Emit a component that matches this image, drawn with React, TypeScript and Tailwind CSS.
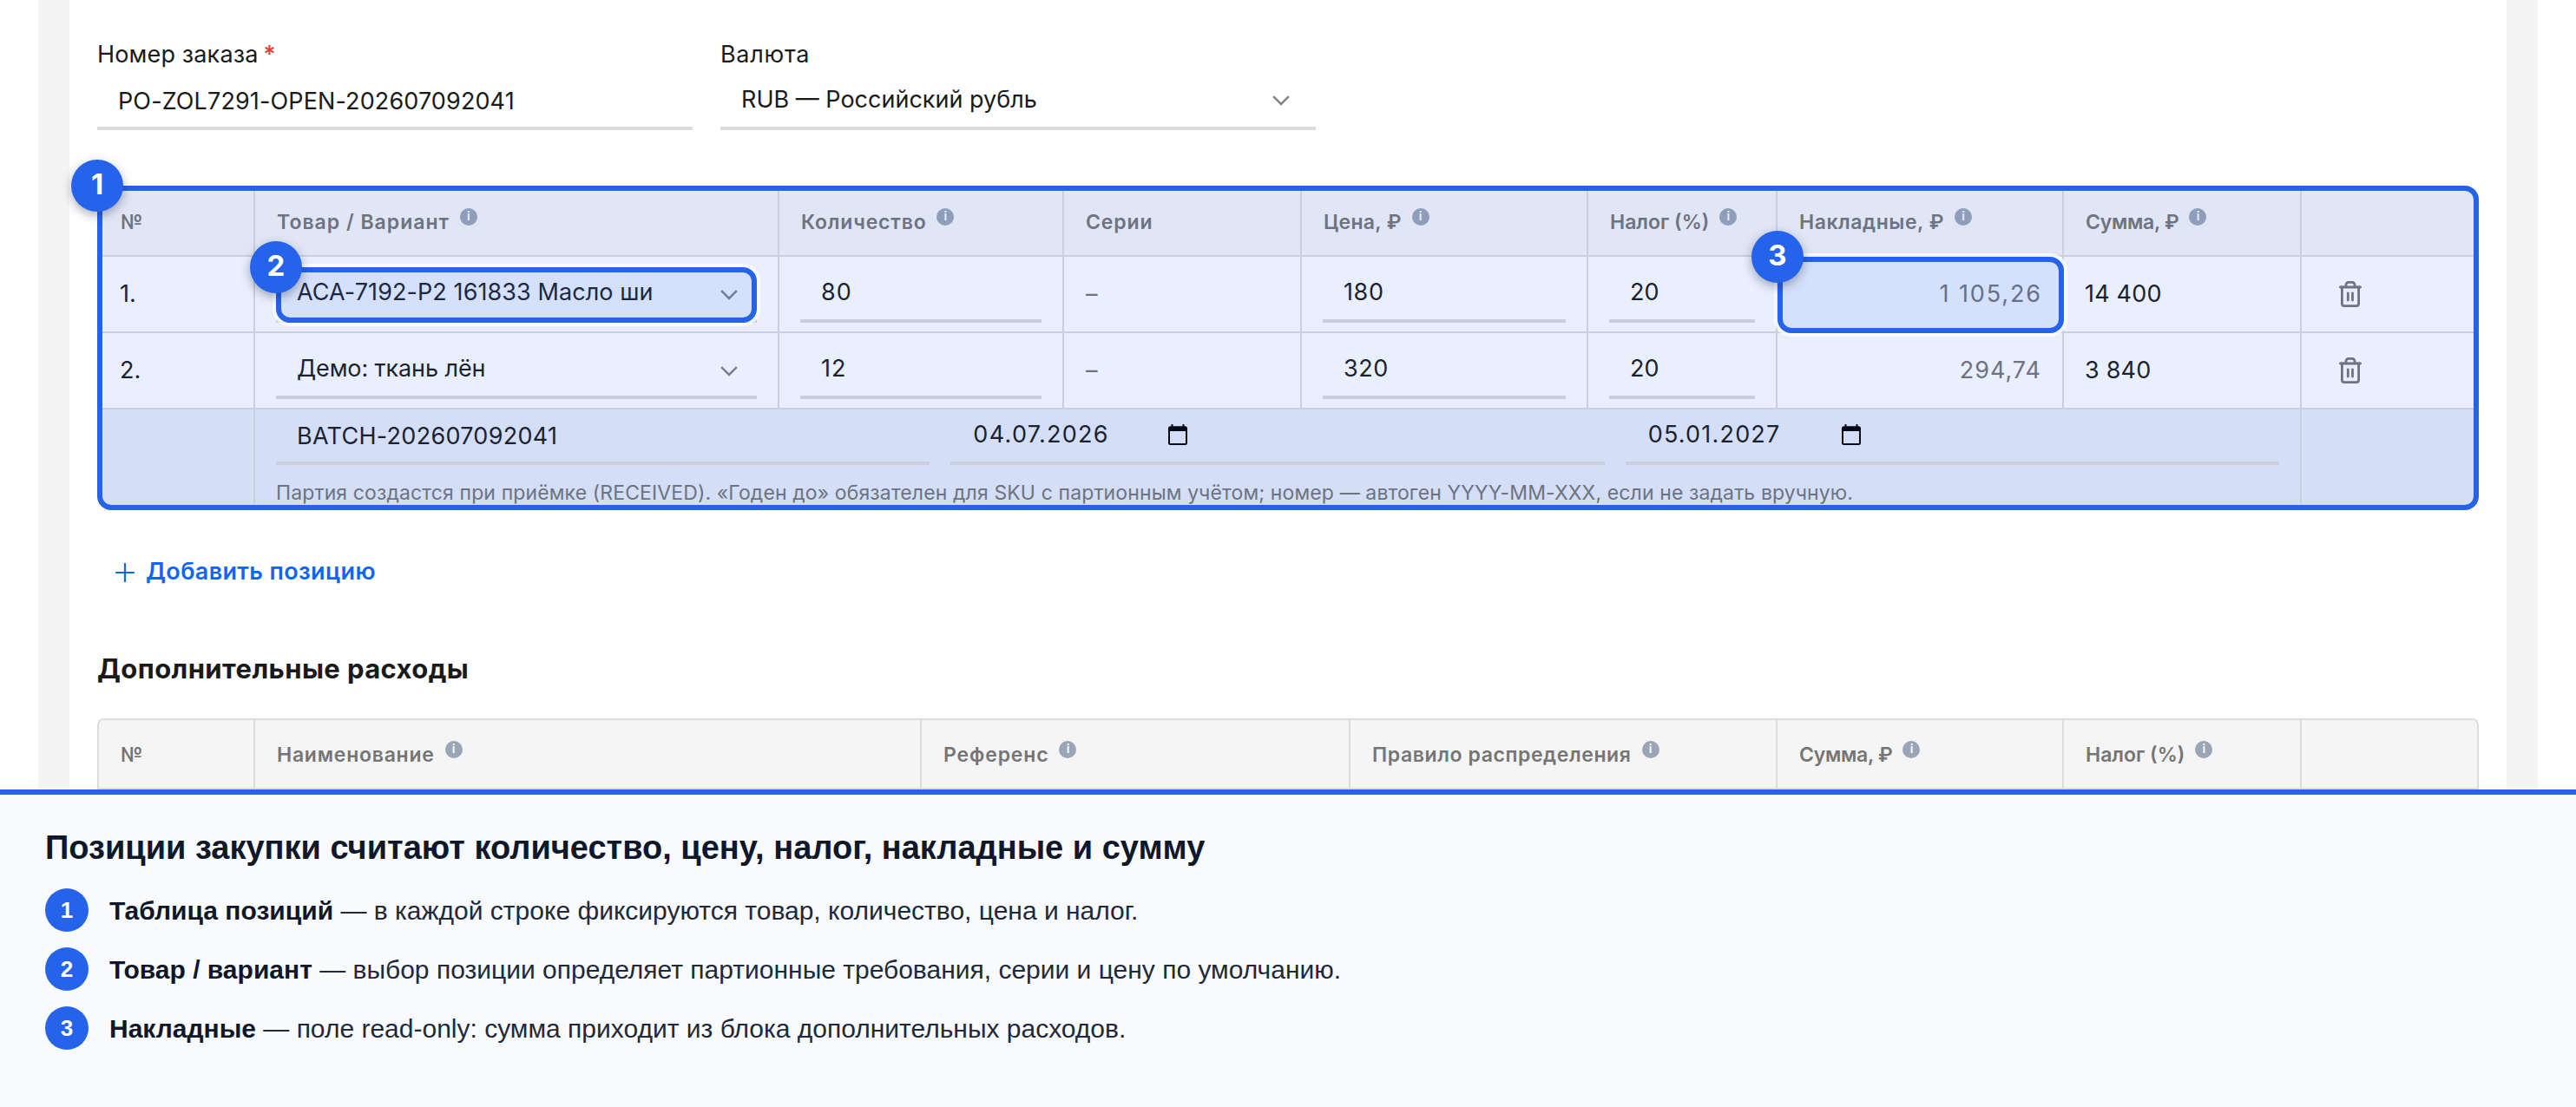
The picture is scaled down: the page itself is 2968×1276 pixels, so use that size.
import type { ReactNode } from "react";

const itemColumns = [
  { title: "№", width: "w-[180px]", tracking: "" },
  { title: "Товар / Вариант", width: "w-[604px]", tracking: "tracking-[1px]", info: true },
  { title: "Количество", width: "w-[328px]", tracking: "tracking-[0.8px]", info: true },
  { title: "Серии", width: "w-[274px]", tracking: "tracking-[0.9px]" },
  { title: "Цена, ₽", width: "w-[330px]", tracking: "tracking-[0.3px]", info: true },
  { title: "Налог (%)", width: "w-[218px]", tracking: "", info: true },
  { title: "Накладные, ₽", width: "w-[330px]", tracking: "tracking-[0.55px]", info: true },
  { title: "Сумма, ₽", width: "w-[274px]", tracking: "tracking-[-0.3px]", info: true },
  { title: "", width: "w-[202px]", tracking: "" },
];

const expenseColumns = [
  { title: "№", width: "w-[180px]", tracking: "" },
  { title: "Наименование", width: "w-[768px]", tracking: "tracking-[0.75px]", info: true },
  { title: "Референс", width: "w-[494px]", tracking: "tracking-[0.85px]", info: true },
  { title: "Правило распределения", width: "w-[492px]", tracking: "tracking-[0.6px]", info: true },
  { title: "Сумма, ₽", width: "w-[330px]", tracking: "tracking-[-0.3px]", info: true },
  { title: "Налог (%)", width: "w-[274px]", tracking: "", info: true },
  { title: "", width: "w-[202px]", tracking: "" },
];

const items = [
  {
    product: "ACA-7192-P2 161833 Масло ши",
    tracking: "tracking-[0.08px]",
    qty: "80",
    price: "180",
    tax: "20",
    overhead: "1 105,26",
    overheadTracking: "tracking-[1.9px] -mr-[1px]",
    total: "14 400",
    selected: true,
  },
  {
    product: "Демо: ткань лён",
    tracking: "tracking-[-0.1px]",
    qty: "12",
    price: "320",
    tax: "20",
    overhead: "294,74",
    overheadTracking: "tracking-[1px]",
    total: "3 840",
    selected: false,
  },
];

const legend = [
  { title: "Таблица позиций", text: "в каждой строке фиксируются товар, количество, цена и налог." },
  { title: "Товар / вариант", text: "выбор позиции определяет партионные требования, серии и цену по умолчанию." },
  { title: "Накладные", text: "поле read-only: сумма приходит из блока дополнительных расходов." },
];

function InfoIcon() {
  return (
    <span className="mb-3 ml-3 flex h-5 w-5 shrink-0 items-center justify-center rounded-full bg-[#9aa5b5] pb-[2px] text-[14px] leading-none font-semibold text-white">
      i
    </span>
  );
}

function Chevron() {
  return (
    <svg width="20" height="12" viewBox="0 0 20 12" fill="none" className="shrink-0">
      <path d="M1.2 1.2L10 10L18.8 1.2" stroke="#858585" strokeWidth="2.6" />
    </svg>
  );
}

function TrashIcon() {
  return (
    <svg width="26" height="30" viewBox="0 0 26 30" fill="none" stroke="#757575" strokeWidth="2.8" strokeLinecap="round" strokeLinejoin="round">
      <path d="M1.4 7h23.2" />
      <path d="M8 6.5V4.3a3 3 0 0 1 3-3h4a3 3 0 0 1 3 3v2.2" />
      <path d="M3.4 7v19a2.6 2.6 0 0 0 2.6 2.6h14a2.6 2.6 0 0 0 2.6-2.6V7" />
      <path d="M10.3 13.8v8.2M15.5 13.8v8.2" />
    </svg>
  );
}

function CalendarIcon() {
  return (
    <svg width="22" height="24" viewBox="0 0 22 24" fill="none" className="mb-[2px]">
      <path d="M4.5 0v4M17.5 0v4" stroke="#000" strokeWidth="2" />
      <rect x="1" y="3.2" width="20" height="19.8" rx="1.5" stroke="#000" strokeWidth="2" />
      <path d="M1 3h20v5H1z" fill="#000" />
    </svg>
  );
}

function Highlight({ n, className }: { n: number; className: string }) {
  return (
    <div
      className={`pointer-events-none absolute rounded-[16px] border-[6px] border-[#2563eb] bg-[#2563eb]/10 shadow-[0_0_0_4px_rgba(255,255,255,0.7)] ${className}`}
    >
      <span className="absolute -top-9 -left-9 flex h-[60px] w-[60px] items-center justify-center rounded-full bg-[#2563eb] pb-[3px] text-[33px] leading-none font-bold text-white shadow-[0_4px_12px_rgba(15,23,42,0.35)]">
        {n}
      </span>
    </div>
  );
}

function HeaderRow({ columns, className }: { columns: typeof itemColumns; className: string }) {
  return (
    <div className={`flex border-b-2 border-[#dcdcdc] bg-[#f5f5f5] ${className}`}>
      {columns.map((col, i) => (
        <div
          key={i}
          className={`flex shrink-0 items-center border-[#dcdcdc] pt-[2px] pr-6 pl-[25px] text-[23px] font-semibold text-[#757575] ${col.width} ${
            i < columns.length - 1 ? "border-r-2" : ""
          }`}
        >
          <span className={`whitespace-nowrap ${col.tracking}`}>{col.title}</span>
          {col.info && <InfoIcon />}
        </div>
      ))}
    </div>
  );
}

function Field({ children, className = "" }: { children: ReactNode; className?: string }) {
  return <div className={`relative flex h-16 items-center border-b-4 border-[#dcdcdc] px-6 ${className}`}>{children}</div>;
}

function Cell({ children, className }: { children?: ReactNode; className: string }) {
  return <div className={`relative shrink-0 border-[#dcdcdc] px-6 ${className}`}>{children}</div>;
}

export default function App() {
  return (
    <div className="flex h-[1276px] w-[2968px] flex-col overflow-hidden bg-white font-['Inter',sans-serif] text-[27px] text-[#1a1a1a]">
      <main className="mx-11 h-[910px] shrink-0 overflow-hidden bg-[#f4f4f4] px-9">
        <div className="h-full bg-white px-8 pt-[42px]">
          <div className="flex gap-8">
            <div className="w-[686px]">
              <div className="mb-[3px] leading-[41px] tracking-[0.15px]">
                Номер заказа<span className="ml-[6px] font-medium text-[#e53935]">*</span>
              </div>
              <Field>
                <span className="pt-[2px] tracking-[0.12px]">PO-ZOL7291-OPEN-202607092041</span>
              </Field>
            </div>
            <div className="w-[686px]">
              <div className="mb-[3px] leading-[41px] tracking-[0.7px]">Валюта</div>
              <Field className="justify-between pr-[30px]">
                <span className="pb-px">RUB — Российский рубль</span>
                <Chevron />
              </Field>
            </div>
          </div>

          {/* Позиции закупки */}
          <div className="relative mt-16 h-[374px]">
            <div className="h-full overflow-hidden rounded-[16px] border-2 border-b-0 border-[#dcdcdc]">
              <HeaderRow columns={itemColumns} className="h-20" />
              {items.map((item, i) => (
                <div key={i} className="flex h-[88px] border-b-2 border-[#dcdcdc]">
                  <Cell className="flex w-[180px] items-center border-r-2">{i + 1}.</Cell>
                  <Cell className="w-[604px] border-r-2 pt-3">
                    <Field className="justify-between pr-[22px]">
                      <span className={`pb-px whitespace-nowrap ${item.tracking}`}>{item.product}</span>
                      <span className="pt-1">
                        <Chevron />
                      </span>
                      {item.selected && <Highlight n={2} className="inset-x-0 top-0 -bottom-1 z-20" />}
                    </Field>
                  </Cell>
                  <Cell className="w-[328px] border-r-2 pt-3">
                    <Field>
                      <span className="pb-px tracking-[1px]">{item.qty}</span>
                    </Field>
                  </Cell>
                  <Cell className="flex w-[274px] items-center border-r-2 pl-[25px] text-[#757575]">–</Cell>
                  <Cell className="w-[330px] border-r-2 pt-3">
                    <Field>
                      <span className="pb-px tracking-[0.6px]">{item.price}</span>
                    </Field>
                  </Cell>
                  <Cell className="w-[218px] border-r-2 pt-3">
                    <Field>
                      <span className="pb-px">{item.tax}</span>
                    </Field>
                  </Cell>
                  <Cell className="flex w-[330px] items-center justify-end border-r-2 text-[#757575]">
                    <span className={item.overheadTracking}>{item.overhead}</span>
                    {item.selected && <Highlight n={3} className="top-0 -right-[2px] -bottom-[2px] left-0 z-20" />}
                  </Cell>
                  <Cell className="flex w-[274px] items-center border-r-2">
                    <span className="tracking-[0.2px]">{item.total}</span>
                  </Cell>
                  <Cell className="flex w-[202px] items-center pl-[43px]">
                    <TrashIcon />
                  </Cell>
                </div>
              ))}
              <div className="flex h-[160px] bg-[#e8edf8]">
                <Cell className="w-[180px] border-r-2" />
                <Cell className="w-[2358px] border-r-2">
                  <div className="grid grid-cols-3 gap-6">
                    <Field>
                      <span className="pt-[2px] tracking-[0.28px]">BATCH-202607092041</span>
                    </Field>
                    <Field>
                      <span className="w-[227px] pb-px pl-[2px] tracking-[1.3px]">04.07.2026</span>
                      <CalendarIcon />
                    </Field>
                    <Field>
                      <span className="w-[225px] pb-px pl-[2px] tracking-[1.2px]">05.01.2027</span>
                      <CalendarIcon />
                    </Field>
                  </div>
                  <div className="mt-4 text-[23px] leading-8 tracking-[0.12px] whitespace-nowrap text-[#757575]">
                    Партия создастся при приёмке (RECEIVED). «Годен до» обязателен для SKU с партионным учётом; номер — автоген YYYY-MM-XXX, если не
                    задать вручную.
                  </div>
                </Cell>
                <Cell className="w-[202px]" />
              </div>
            </div>
            <Highlight n={1} className="inset-0 z-10" />
          </div>

          <button className="mt-[50px] flex h-10 items-center gap-[13px] pl-[21px] font-semibold text-[#0d66f5]">
            <svg width="22" height="22" viewBox="0 0 22 22" fill="none" className="mt-1">
              <path d="M11 1v20M1 11h20" stroke="currentColor" strokeWidth="2.2" strokeLinecap="round" />
            </svg>
            <span className="pt-[2px] tracking-[0.35px]">Добавить позицию</span>
          </button>

          <h2 className="mt-[73px] text-[31px] leading-10 font-bold tracking-[0.4px]">Дополнительные расходы</h2>
          <div className="mt-[37px] h-[90px] overflow-hidden rounded-t-[8px] border-2 border-b-0 border-[#dcdcdc]">
            <HeaderRow columns={expenseColumns} className="h-20" />
          </div>
        </div>
      </main>

      <footer className="flex-1 border-t-[6px] border-[#2563eb] bg-[#f8fafc] px-[52px] pt-[38px] font-['Liberation_Sans',Arial,sans-serif] text-[30px] text-[#1e293b]">
        <h1 className="mb-6 text-[38px] leading-[46px] font-bold text-[#0f172a]">
          Позиции закупки считают количество, цену, налог, накладные и сумму
        </h1>
        <ul className="flex flex-col gap-[18px]">
          {legend.map((entry, i) => (
            <li key={i} className="flex h-[50px] items-center gap-6">
              <span className="flex h-[50px] w-[50px] items-center justify-center rounded-full bg-[#2563eb] text-[26px] font-bold text-white">
                {i + 1}
              </span>
              <span>
                <b className="text-[#0f172a]">{entry.title}</b> — {entry.text}
              </span>
            </li>
          ))}
        </ul>
      </footer>
    </div>
  );
}
